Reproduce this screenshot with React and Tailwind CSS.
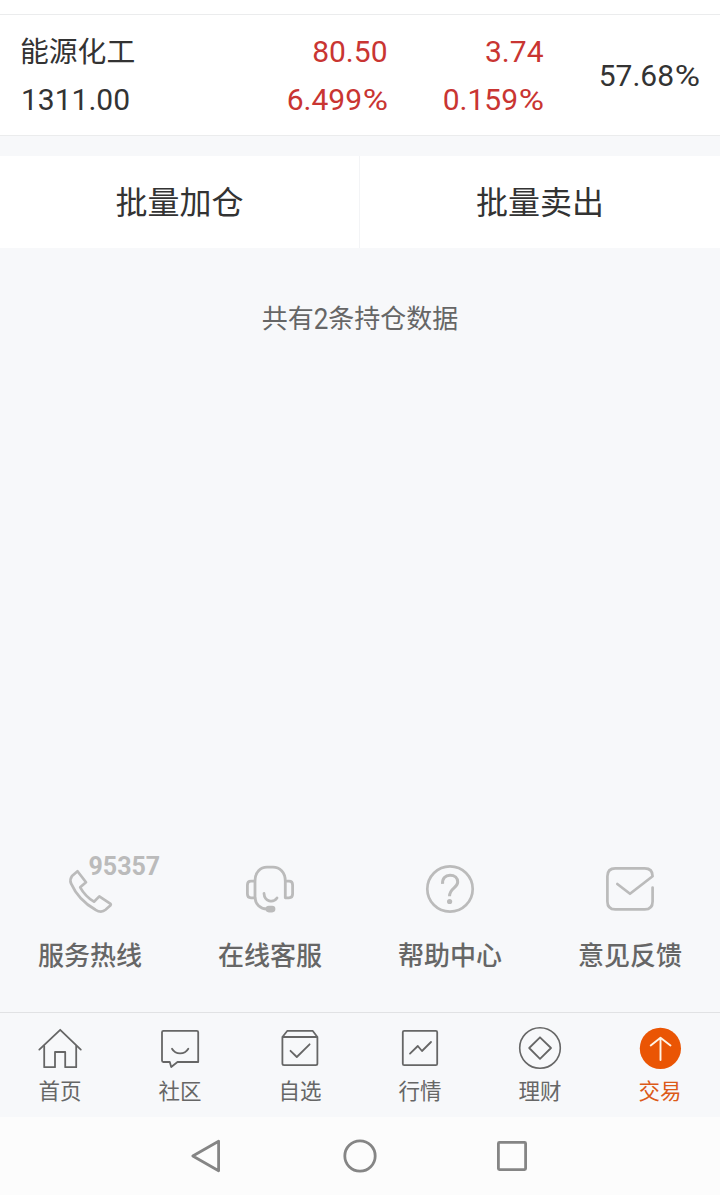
const SANS = "font-['Roboto','Noto_Sans_CJK_SC',sans-serif]";
const CJK = "font-['Noto_Sans_CJK_SC',sans-serif]";

function Percent({ value }) {
  return (
    <span>
      {value}
      <span className="ml-[3.5px] inline-block origin-right scale-x-[1.15]">%</span>
    </span>
  );
}

function Holding() {
  return (
    <section className="flex h-[122px] items-center border-y border-[#ebeced] bg-white pt-px text-[30px] leading-[48px] text-[#333]">
      <div className="flex w-[232px] flex-col pl-5">
        <span className={`-mt-px h-[49px] text-[28.8px] leading-[46px] ${CJK}`}>能源化工</span>
        <span className="h-12 pl-px">1311.00</span>
      </div>
      <div className="flex w-[156px] flex-col pr-[0.5px] text-right text-[#c93532]">
        <span>80.50</span>
        <Percent value="6.499" />
      </div>
      <div className="flex w-[156px] flex-col pr-[0.5px] text-right text-[#c93532]">
        <span>3.74</span>
        <Percent value="0.159" />
      </div>
      <div className="w-[156px] pr-[0.5px] text-right">
        <Percent value="57.68" />
      </div>
    </section>
  );
}

function PhoneIcon() {
  return (
    <svg viewBox="60 860 60 60" className="h-[60px] w-[60px]" fill="none" stroke="#bbb" strokeWidth="2.7" strokeLinecap="round" strokeLinejoin="round">
      <path d="M77.5 871.2 L86 882.3 L80.2 887.3 C83.5 893.3 88 898 94 901.7 L99.3 896.4 L110.6 903.8 C111 904.3 110.8 905 110.3 905.6 L105.5 909.8 C102.5 912.3 99 911.9 95.5 909.8 C84 903.4 75.5 893.5 71 883.4 C69.8 880.4 70.4 878.2 72 876 Z" />
    </svg>
  );
}

function HeadsetIcon() {
  return (
    <svg viewBox="240 860 60 60" className="h-[60px] w-[60px]" fill="none" stroke="#bbb" strokeWidth="2.8" strokeLinecap="round" strokeLinejoin="round">
      <path d="M255 898 V881 C255 872 260.5 867.2 267 867.2 H273 C279.5 867.2 285.3 872 285.3 881 V897.8 H289 C291.5 897.8 292.6 896.5 292.6 894 V885 C292.6 882.5 291.5 881.2 289 881.2 H286" />
      <path d="M254.5 881.2 H251 C248.5 881.2 247.4 882.5 247.4 885 V894 C247.4 896.5 248.5 897.8 251 897.8 H255 C255.5 904 260 908.8 267 909" />
      <path d="M264 893.5 C264.5 901.5 273 903.5 277 898" />
      <rect x="267" y="907.2" width="7" height="3.8" rx="1.9" fill="#bbb" />
    </svg>
  );
}

function HelpIcon() {
  return (
    <svg viewBox="420 860 60 60" className="h-[60px] w-[60px]" fill="none" stroke="#bbb" strokeWidth="2.7">
      <circle cx="450" cy="889" r="22.7" />
      <path d="M442.6 883.8 C442.2 878.2 445.3 875.2 450 875.2 C454.8 875.2 457.7 878.2 457.7 882 C457.7 888 449.5 888 449.5 896.3" strokeWidth="3" />
      <circle cx="449.6" cy="901.5" r="2.6" fill="#bbb" stroke="none" />
    </svg>
  );
}

function FeedbackIcon() {
  return (
    <svg viewBox="600 860 60 60" className="h-[60px] w-[60px]" fill="none" stroke="#bbb" strokeWidth="2.7" strokeLinecap="round" strokeLinejoin="round">
      <path d="M652.6 887.5 V901.5 C652.6 906.5 649.7 909.4 644.7 909.4 H615.3 C610.3 909.4 607.4 906.5 607.4 901.5 V876.3 C607.4 871.3 610.3 868.4 615.3 868.4 H644.7 C649.7 868.4 652.6 871.3 652.6 876.3 L630 893.8 L617.3 884" />
    </svg>
  );
}

const services = [
  { label: "服务热线", Icon: PhoneIcon, badge: "95357" },
  { label: "在线客服", Icon: HeadsetIcon },
  { label: "帮助中心", Icon: HelpIcon },
  { label: "意见反馈", Icon: FeedbackIcon },
];

function TabIcon({ x, children }) {
  return (
    <svg viewBox={`${x} 1024 48 48`} className="h-12 w-12" fill="none" stroke="#666" strokeWidth="1.8" strokeLinecap="round" strokeLinejoin="round">
      {children}
    </svg>
  );
}

const tabs = [
  {
    label: "首页",
    icon: (
      <TabIcon x={36}>
        <path d="M39.3 1049.6 L60.2 1029.8 L80.8 1049.6" />
        <path d="M44.2 1046 V1067.2 H55 V1052 H65.2 V1067.2 H76.2 V1046" />
      </TabIcon>
    ),
  },
  {
    label: "社区",
    icon: (
      <TabIcon x={156}>
        <path d="M163.5 1030.8 H196.8 Q198.2 1030.8 198.2 1032.2 V1062 H177.5 L171.2 1067 L169.8 1062 H163.4 Q162 1062 162 1060.6 V1032.2 Q162 1030.8 163.5 1030.8 Z" />
        <path d="M172 1048.8 C175.5 1055 184.7 1055 188.3 1048.8" />
      </TabIcon>
    ),
  },
  {
    label: "自选",
    icon: (
      <TabIcon x={276}>
        <path d="M282.4 1037 H317.4 V1063.6 Q317.4 1065.2 315.8 1065.2 H284 Q282.4 1065.2 282.4 1063.6 Z L287.4 1030.8 H312.6 L317.4 1037" />
        <path d="M290.5 1050.8 L296.8 1057 L309.6 1044.3" />
      </TabIcon>
    ),
  },
  {
    label: "行情",
    icon: (
      <TabIcon x={396}>
        <rect x="402.8" y="1030.8" width="34.4" height="34.4" rx="1.4" />
        <path d="M410 1053.6 L417.8 1046 L422 1051 L431 1042" />
      </TabIcon>
    ),
  },
  {
    label: "理财",
    icon: (
      <TabIcon x={516}>
        <circle cx="540" cy="1048" r="20.3" strokeWidth="1.6" />
        <path d="M540 1037.3 L551 1048 L540 1058.8 L529.2 1048 Z" />
      </TabIcon>
    ),
  },
  {
    label: "交易",
    active: true,
    icon: (
      <TabIcon x={636}>
        <circle cx="660.4" cy="1048.4" r="20.6" fill="#ea5504" stroke="none" />
        <path d="M660.5 1060 V1038 M650.7 1045.5 L660.5 1037.7 L670.5 1045.5" stroke="#fff3e4" strokeWidth="1.9" />
      </TabIcon>
    ),
  },
];

export default function App() {
  return (
    <main className={`flex h-[1195px] w-[720px] flex-col overflow-hidden bg-[#f7f8fa] ${SANS}`}>
      <div className="h-3.5 shrink-0 bg-white" />
      <Holding />
      <div className={`mt-5 flex h-[92px] shrink-0 bg-white text-[32px] text-[#333] ${CJK}`}>
        <button className="w-[360px] border-r border-[#f3f4f6] pb-[5px]">批量加仓</button>
        <button className="w-[360px] pb-[5px]">批量卖出</button>
      </div>
      <p className={`mt-[49px] text-center text-[26px] leading-10 text-[#666] ${CJK}`}>共有<span className="inline-block scale-y-110 font-['Roboto']">2</span>条持仓数据</p>
      <div className="mt-auto grid h-[152px] shrink-0 grid-cols-4">
        {services.map(({ label, Icon, badge }) => (
          <div key={label} className="relative flex flex-col items-center">
            <Icon />
            {badge && (
              <span className="absolute top-[-5px] left-[88.5px] text-[25px] leading-6 font-bold text-[#bbb]">{badge}</span>
            )}
            <span className={`mt-3.5 text-[26px] leading-10 font-medium text-[#666] ${CJK}`}>{label}</span>
          </div>
        ))}
      </div>
      <nav className="grid h-[105px] shrink-0 grid-cols-6 border-t border-[#e1e2e4]">
        {tabs.map(({ label, icon, active }) => (
          <div key={label} className={`flex flex-col items-center pt-[11px] ${active ? "text-[#dc5a18]" : "text-[#666]"}`}>
            {icon}
            <span className={`mt-0.5 text-[21.5px] leading-8 ${CJK}`}>{label}</span>
          </div>
        ))}
      </nav>
      <footer className="flex h-[78px] shrink-0 justify-center bg-[#fcfcfc]">
        <svg viewBox="180 1117 360 78" className="h-[78px] w-[360px]" fill="none" stroke="#858585" strokeWidth="2.8" strokeLinejoin="round">
          <path d="M218.6 1141.2 V1170.8 L192.8 1156 Z" />
          <circle cx="360" cy="1156" r="15.2" />
          <rect x="498.4" y="1142.4" width="27.2" height="27.2" rx="1" />
        </svg>
      </footer>
    </main>
  );
}
